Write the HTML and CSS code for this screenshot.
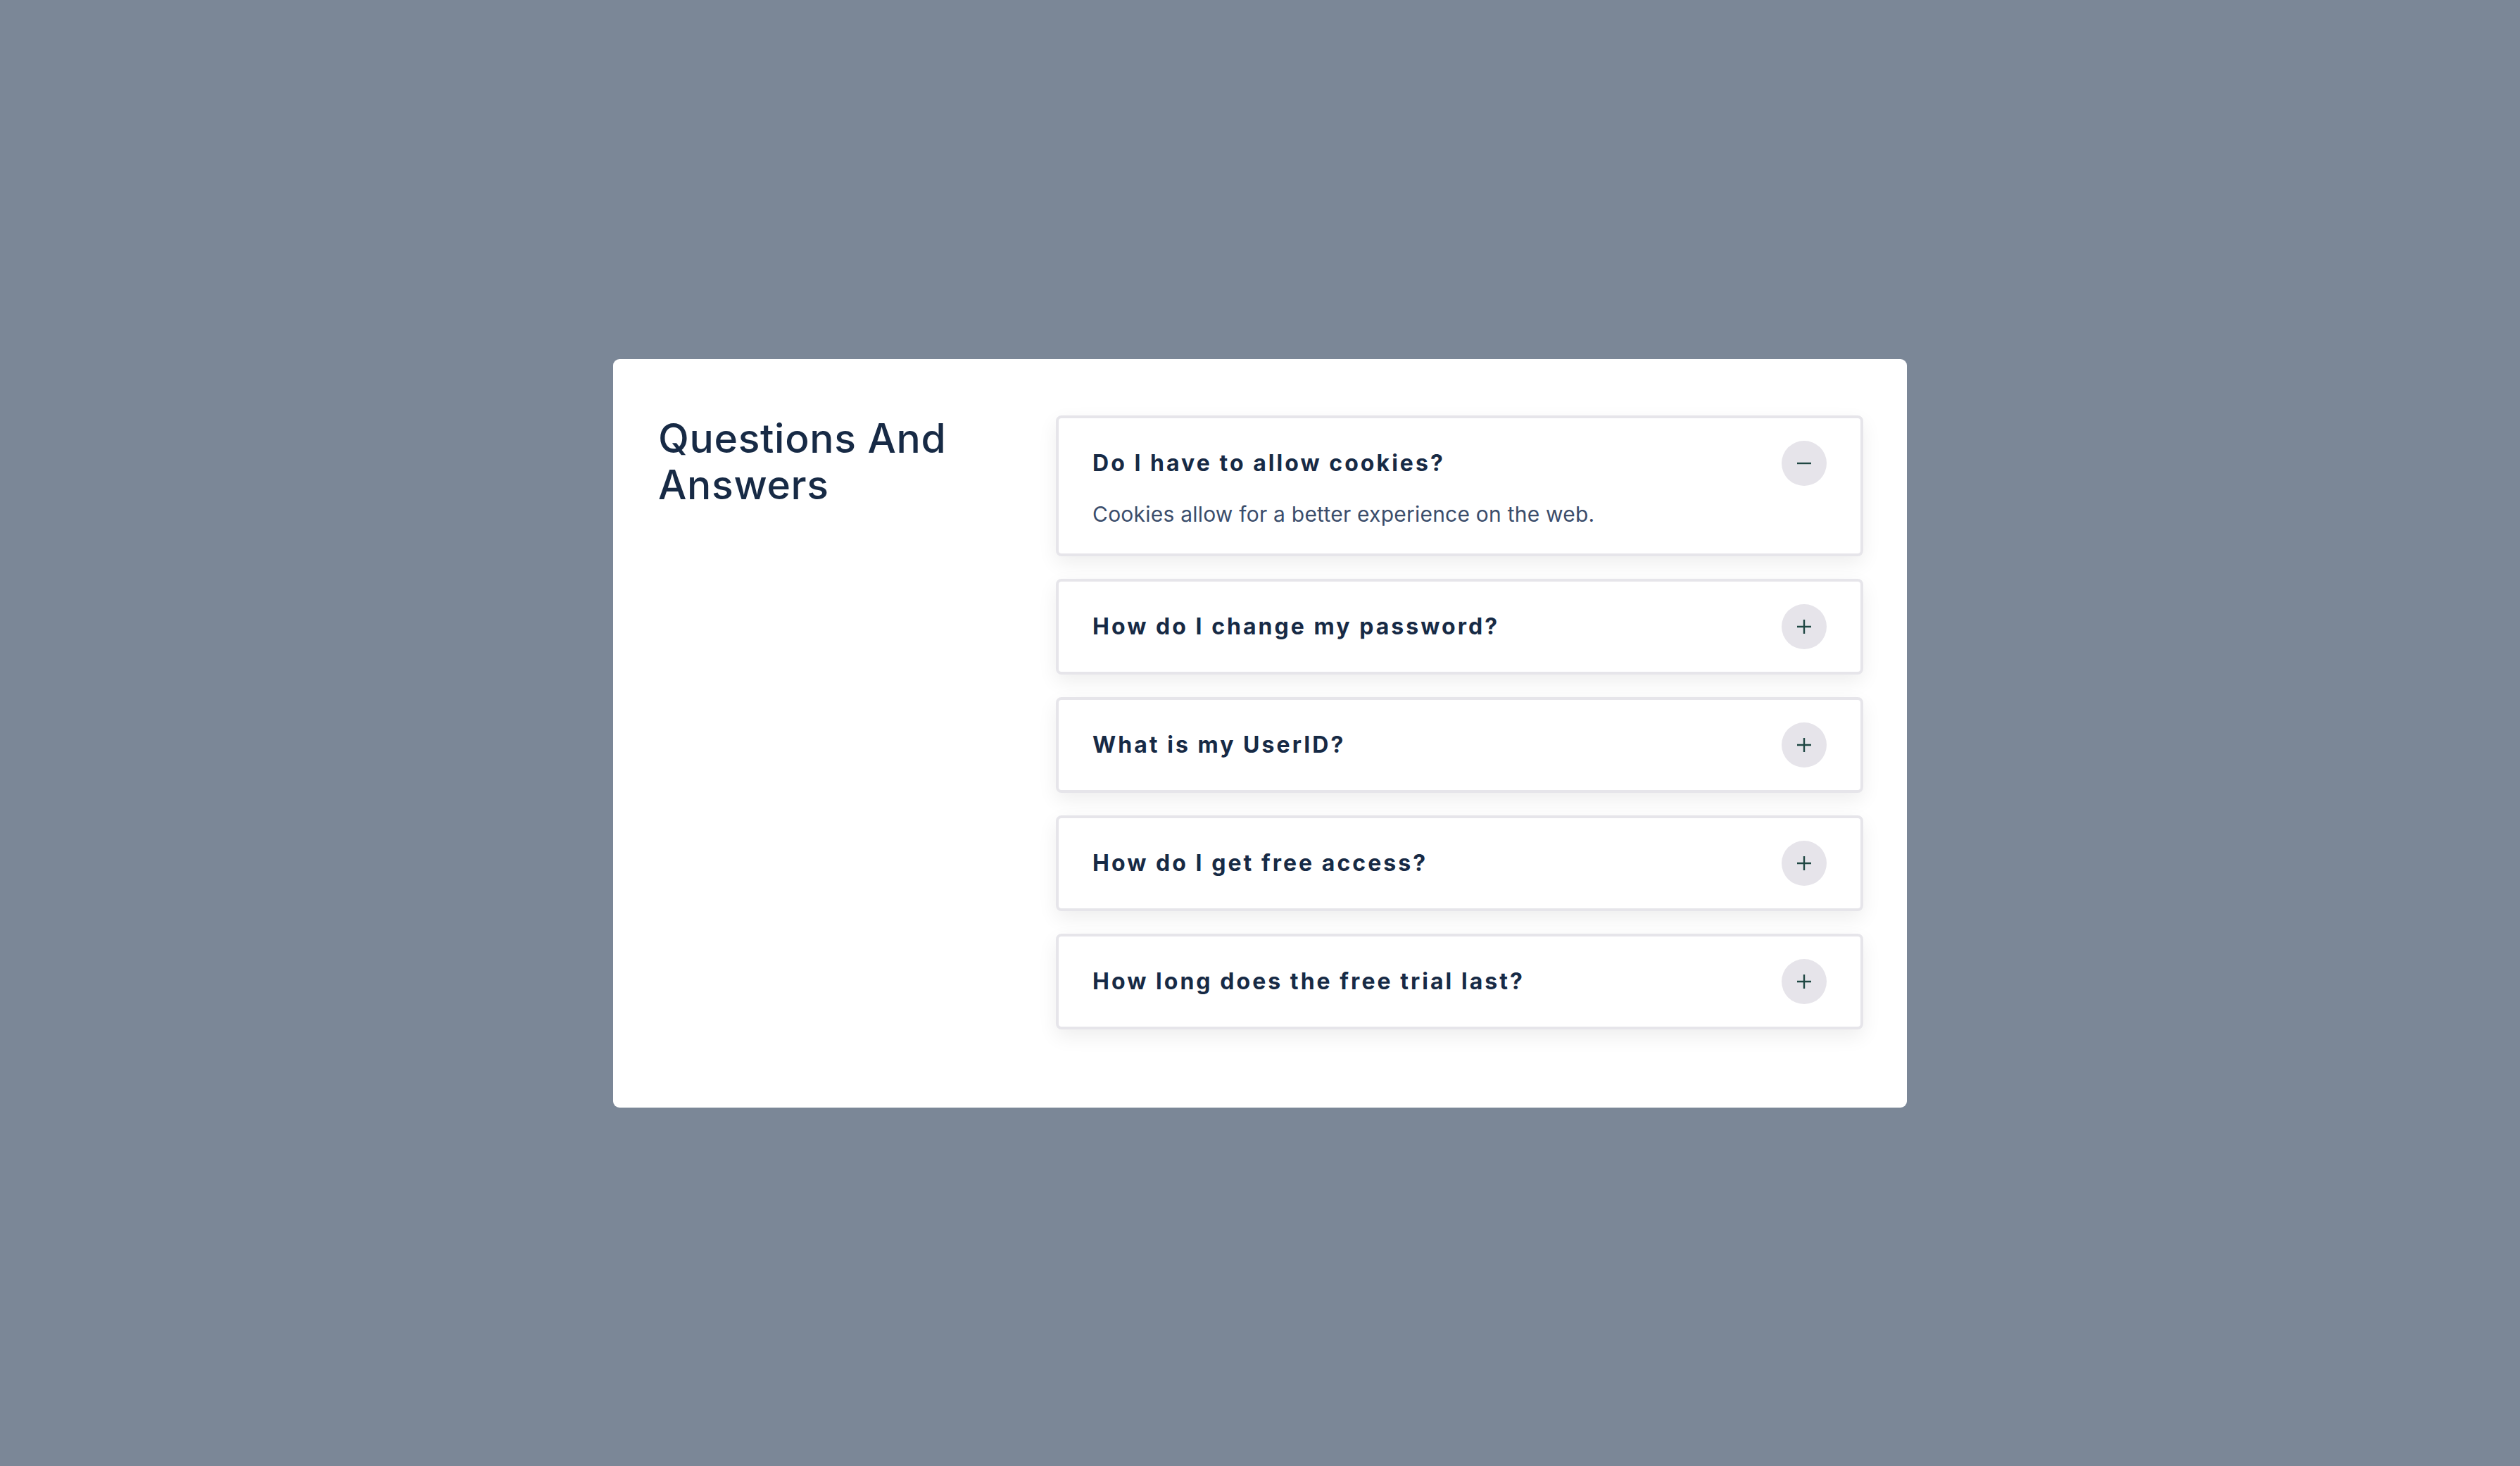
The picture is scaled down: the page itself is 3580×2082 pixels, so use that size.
FILE: index.html
```html
<!DOCTYPE html>
<html lang="en">
<head>
<meta charset="utf-8">
<title>Questions And Answers</title>
<link rel="stylesheet" href="styles.css">
</head>
<body>
<main class="card">
  <h1 class="title">Questions And Answers</h1>
  <div class="faq">
    <div class="item open">
      <div class="head">
        <span class="q">Do I have to allow cookies?</span>
        <span class="btn"><svg viewBox="0 0 20 20" width="20" height="20"><path d="M0 10H20" stroke="#1f4743" stroke-width="2.4"/></svg></span>
      </div>
      <p class="a">Cookies allow for a better experience on the web.</p>
    </div>
    <div class="item">
      <div class="head">
        <span class="q">How do I change my password?</span>
        <span class="btn"><svg viewBox="0 0 20 20" width="20" height="20"><path d="M0 10H20M10 0V20" stroke="#1f4743" stroke-width="2.4"/></svg></span>
      </div>
    </div>
    <div class="item">
      <div class="head">
        <span class="q">What is my UserID?</span>
        <span class="btn"><svg viewBox="0 0 20 20" width="20" height="20"><path d="M0 10H20M10 0V20" stroke="#1f4743" stroke-width="2.4"/></svg></span>
      </div>
    </div>
    <div class="item">
      <div class="head">
        <span class="q">How do I get free access?</span>
        <span class="btn"><svg viewBox="0 0 20 20" width="20" height="20"><path d="M0 10H20M10 0V20" stroke="#1f4743" stroke-width="2.4"/></svg></span>
      </div>
    </div>
    <div class="item">
      <div class="head">
        <span class="q">How long does the free trial last?</span>
        <span class="btn"><svg viewBox="0 0 20 20" width="20" height="20"><path d="M0 10H20M10 0V20" stroke="#1f4743" stroke-width="2.4"/></svg></span>
      </div>
    </div>
  </div>
</main>
</body>
</html>
```
FILE: styles.css
```css
* { box-sizing: border-box; }
html, body { margin: 0; height: 100%; }
body {
  background: #7b8797;
  display: flex;
  align-items: center;
  justify-content: center;
  font-family: Inter, "Liberation Sans", sans-serif;
}
.card {
  width: 1838px;
  height: 1063px;
  background: #ffffff;
  border-radius: 9px;
  padding: 80px 62px 111px 64px;
  display: flex;
  justify-content: space-between;
}
.title {
  margin: 0;
  width: 480px;
  font-size: 57px;
  line-height: 66px;
  font-weight: 500;
  letter-spacing: 0.012em;
  color: #172a45;
}
.faq {
  width: 1147px;
  display: flex;
  flex-direction: column;
  gap: 32px;
}
.item {
  border: 4px solid #e6e5ea;
  border-radius: 8px;
  background: #fff;
  padding: 32px 48px;
  box-shadow: 0 10px 28px rgba(0, 0, 0, 0.07);
}
.head {
  display: flex;
  align-items: center;
  justify-content: space-between;
  height: 64px;
}
.q {
  font-size: 32px;
  font-weight: 700;
  letter-spacing: 0.095em;
  color: #172a45;
}
.btn {
  width: 64px;
  height: 64px;
  border-radius: 50%;
  background: #e6e4ea;
  display: flex;
  align-items: center;
  justify-content: center;
}
.a {
  margin: 16px 0 0;
  font-size: 30px;
  line-height: 48px;
  letter-spacing: 0.22px;
  color: #3b4d6b;
}
```
